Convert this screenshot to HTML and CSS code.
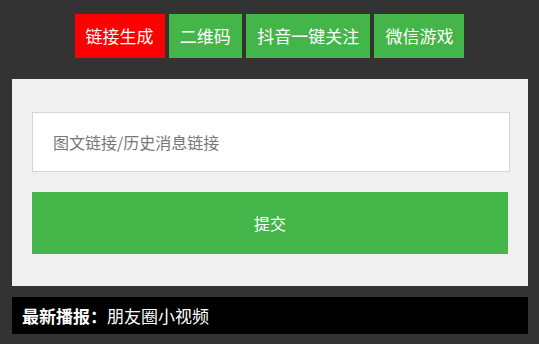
FILE: index.html
```html
<!DOCTYPE html>
<html lang="zh-CN">
<head>
<meta charset="utf-8">
<title>链接生成</title>
<link rel="stylesheet" href="styles.css">
</head>
<body>
<nav class="tabs">
  <a class="tab tab-active" href="#">链接生成</a>
  <a class="tab" href="#">二维码</a>
  <a class="tab" href="#">抖音一键关注</a>
  <a class="tab" href="#">微信游戏</a>
</nav>
<form class="panel">
  <input class="field" type="text" placeholder="图文链接/历史消息链接">
  <button class="submit" type="button">提交</button>
</form>
<div class="ticker"><span class="ticker-label">最新播报：</span><span class="ticker-text">朋友圈小视频</span></div>
</body>
</html>
```

FILE: styles.css
```css
* { box-sizing: border-box; }
html, body {
  margin: 0;
  padding: 0;
}
body {
  background: #333333;
  font-family: "Noto Sans CJK SC", "Noto Sans", sans-serif;
  width: 539px;
  height: 344px;
  overflow: hidden;
}
.tabs {
  display: flex;
  justify-content: center;
  gap: 4.3px;
  padding-top: 14px;
}
.tab {
  display: block;
  height: 44px;
  line-height: 44px;
  padding: 0 11px;
  font-size: 17px;
  color: #ffffff;
  text-decoration: none;
  background: #44b549;
}
.tab-active {
  background: #ff0000;
}
.panel {
  display: flex;
  flex-direction: column;
  align-items: flex-start;
  gap: 20px;
  margin: 21px 11px 0 12px;
  padding: 33px 20px 32px 20px;
  background: #f0f0f0;
}
.field {
  width: calc(100% + 2px);
  height: 60px;
  margin: 0;
  padding: 0 20px;
  border: 1px solid #d4d4d4;
  background: #ffffff;
  font-family: inherit;
  font-size: 16px;
  color: #333;
  outline: none;
}
.field::placeholder {
  color: #777777;
}
.submit {
  width: 100%;
  height: 62px;
  margin: 0;
  padding: 0;
  border: none;
  background: #44b549;
  color: #ffffff;
  font-family: inherit;
  font-size: 16px;
}
.ticker {
  margin: 11px 11px 0 12px;
  height: 37px;
  line-height: 37px;
  padding-left: 10px;
  background: #000000;
  color: #ffffff;
  font-size: 17px;
}
.ticker-label {
  font-weight: bold;
}
```
